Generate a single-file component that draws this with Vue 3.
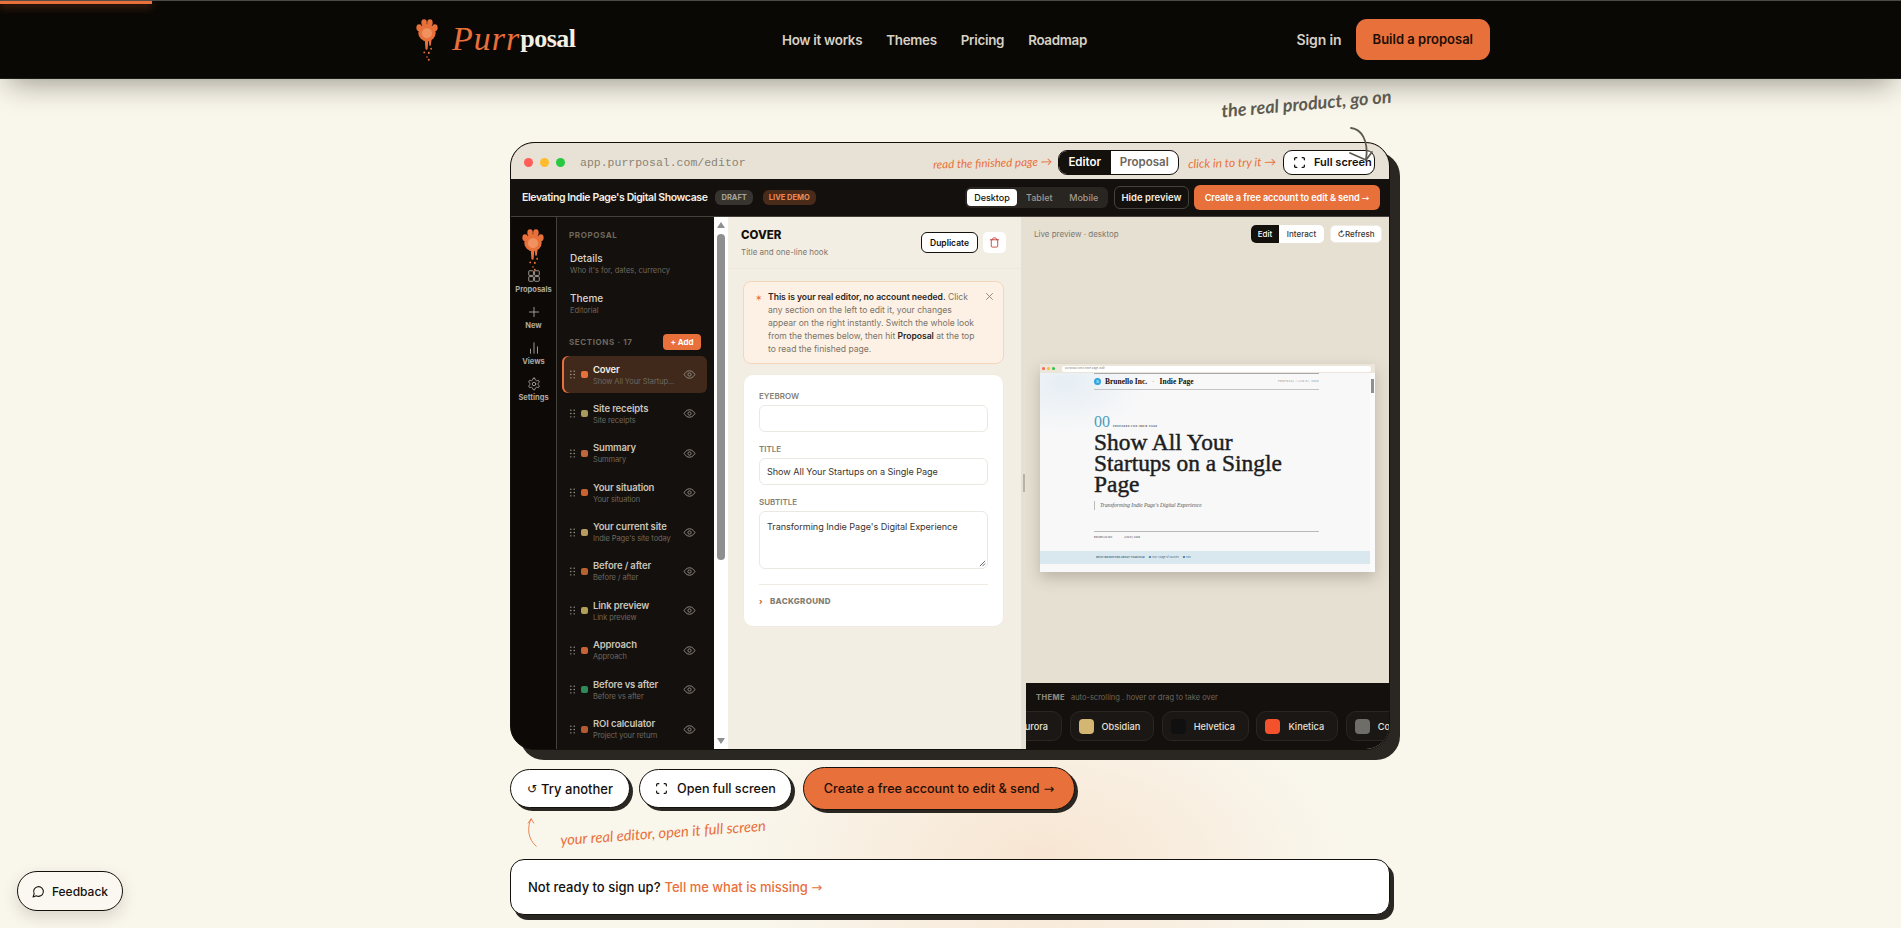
<template>
  <div class="page">
    <header class="site-header">
      <div class="progress"></div>
      <a class="logo">
        <svg class="paw" viewBox="0 0 24 48"><use href="#paw-shape" /></svg>
        <span class="logo-purr">Purr</span><span class="logo-posal">posal</span>
      </a>
      <nav class="site-nav">
        <a>How it works</a>
        <a>Themes</a>
        <a>Pricing</a>
        <a>Roadmap</a>
      </nav>
      <div class="site-actions">
        <a class="sign-in">Sign in</a>
        <a class="build-btn">Build a proposal</a>
      </div>
    </header>

    <!-- shared paw -->
    <svg width="0" height="0" class="defs">
      <defs>
        <g id="paw-shape">
          <ellipse cx="12" cy="15.5" rx="9.5" ry="9.5" fill="#e8703a" />
          <ellipse cx="3.4" cy="10" rx="3" ry="3.8" fill="#e8703a" />
          <ellipse cx="8.8" cy="4.6" rx="3" ry="3.8" fill="#e8703a" />
          <ellipse cx="15.2" cy="4.6" rx="3" ry="3.8" fill="#e8703a" />
          <ellipse cx="20.6" cy="10" rx="3" ry="3.8" fill="#e8703a" />
          <circle cx="12" cy="16" r="5.5" fill="#f0915f" />
          <path d="M9.5 23h4l-.8 10a1.2 1.2 0 0 1-2.4 0z" fill="#e8703a" />
          <path d="M14 23h3l-.8 6a.9.9 0 0 1-1.8 0z" fill="#e8703a" />
          <circle cx="16.5" cy="33" r="1" fill="#e8703a" />
          <circle cx="9" cy="37" r="1" fill="#e8703a" />
          <circle cx="14" cy="37.5" r="1.1" fill="#e8703a" />
          <circle cx="12" cy="42" r=".9" fill="#e8703a" />
          <circle cx="14" cy="45" r="1.1" fill="#e8703a" />
        </g>
      </defs>
    </svg>

    <main class="main">
      <p class="scribble-top">the real product, go on</p>
      <svg class="arrow-top" viewBox="0 0 40 40" fill="none" stroke="#5e5a50" stroke-width="1.8" stroke-linecap="round" stroke-linejoin="round">
        <path d="M6 3C16 4 24 15 21 35" />
        <path d="M5 28l16 7 6-8" />
      </svg>

      <section class="window">
        <div class="titlebar">
          <span class="dot red"></span>
          <span class="dot amber"></span>
          <span class="dot green"></span>
          <span class="url">app.purrposal.com/editor</span>
          <span class="spacer"></span>
          <span class="hand-note">read the finished page →</span>
          <div class="mode-toggle">
            <span class="mode on">Editor</span>
            <span class="mode">Proposal</span>
          </div>
          <span class="hand-note second">click in to try it →</span>
          <button class="fs-btn">
            <svg viewBox="0 0 24 24" fill="none" stroke="currentColor" stroke-width="2.4" stroke-linecap="round"><path d="M3 7V5a2 2 0 0 1 2-2h2M17 3h2a2 2 0 0 1 2 2v2M21 17v2a2 2 0 0 1-2 2h-2M7 21H5a2 2 0 0 1-2-2v-2" /></svg>
            Full screen
          </button>
        </div>

        <div class="toolbar">
          <strong class="doc-title">Elevating Indie Page's Digital Showcase</strong>
          <span class="chip">DRAFT</span>
          <span class="chip live">LIVE DEMO</span>
          <span class="spacer"></span>
          <div class="devices">
            <span class="device on">Desktop</span>
            <span class="device">Tablet</span>
            <span class="device">Mobile</span>
          </div>
          <button class="hide-btn">Hide preview</button>
          <button class="create-small">Create a free account to edit &amp; send <span class="long-arrow">→</span></button>
        </div>

        <div class="workspace">
          <aside class="rail">
            <svg class="rail-paw" viewBox="0 0 24 48"><use href="#paw-shape" /></svg>
            <div class="rail-item">
              <svg viewBox="0 0 24 24" fill="none" stroke="currentColor" stroke-width="1.5"><rect x="3" y="3" width="8" height="8" rx="1" /><rect x="13" y="3" width="8" height="8" rx="1" /><rect x="3" y="13" width="8" height="8" rx="1" /><rect x="13" y="13" width="8" height="8" rx="1" /></svg>
              <span>Proposals</span>
            </div>
            <div class="rail-item">
              <svg viewBox="0 0 24 24" fill="none" stroke="currentColor" stroke-width="1.5" stroke-linecap="round"><path d="M12 4v16M4 12h16" /></svg>
              <span>New</span>
            </div>
            <div class="rail-item">
              <svg viewBox="0 0 24 24" fill="none" stroke="currentColor" stroke-width="1.5" stroke-linecap="round"><path d="M6 21v-7M12 21V3M18 21V10" /></svg>
              <span>Views</span>
            </div>
            <div class="rail-item">
              <svg viewBox="0 0 24 24" fill="none" stroke="currentColor" stroke-width="1.5" stroke-linecap="round" stroke-linejoin="round"><path d="M12.2 2h-.4a2 2 0 0 0-2 2v.2a2 2 0 0 1-1 1.7l-.4.3a2 2 0 0 1-2 0l-.2-.1a2 2 0 0 0-2.7.7l-.2.4a2 2 0 0 0 .7 2.7l.2.1a2 2 0 0 1 1 1.7v.5a2 2 0 0 1-1 1.8l-.2.1a2 2 0 0 0-.7 2.7l.2.4a2 2 0 0 0 2.7.7l.2-.1a2 2 0 0 1 2 0l.4.3a2 2 0 0 1 1 1.7v.2a2 2 0 0 0 2 2h.4a2 2 0 0 0 2-2v-.2a2 2 0 0 1 1-1.7l.4-.3a2 2 0 0 1 2 0l.2.1a2 2 0 0 0 2.7-.7l.2-.4a2 2 0 0 0-.7-2.7l-.2-.1a2 2 0 0 1-1-1.8v-.5a2 2 0 0 1 1-1.7l.2-.1a2 2 0 0 0 .7-2.7l-.2-.4a2 2 0 0 0-2.7-.7l-.2.1a2 2 0 0 1-2 0l-.4-.3a2 2 0 0 1-1-1.7V4a2 2 0 0 0-2-2z" /><circle cx="12" cy="12" r="3" /></svg>
              <span>Settings</span>
            </div>
          </aside>

          <aside class="sections">
            <h4 class="side-label">PROPOSAL</h4>
            <div class="side-link">
              <b>Details</b>
              <small>Who it's for, dates, currency</small>
            </div>
            <div class="side-link">
              <b>Theme</b>
              <small>Editorial</small>
            </div>
            <div class="sections-head">
              <h4 class="side-label">SECTIONS · 17</h4>
              <button class="add-btn">+ Add</button>
            </div>
            <div class="section-list">
              <div v-for="(s, i) in sections" :key="s.name" class="section-row" :class="{ active: i === 0 }">
                <svg class="grip" viewBox="0 0 6 10" fill="#b9b3a8"><circle cx="1" cy="1" r=".8" /><circle cx="5" cy="1" r=".8" /><circle cx="1" cy="5" r=".8" /><circle cx="5" cy="5" r=".8" /><circle cx="1" cy="9" r=".8" /><circle cx="5" cy="9" r=".8" /></svg>
                <span class="sec-dot" :style="{ background: s.color }"></span>
                <div class="sec-text">
                  <b>{{ s.name }}</b>
                  <small>{{ s.sub }}</small>
                </div>
                <svg class="eye" viewBox="0 0 24 24" fill="none" stroke="currentColor" stroke-width="1.8"><path d="M2 12s3.6-7 10-7 10 7 10 7-3.6 7-10 7-10-7-10-7z" /><circle cx="12" cy="12" r="3" /></svg>
              </div>
            </div>
          </aside>

          <div class="scrollbar">
            <i class="arrow up"></i>
            <i class="thumb"></i>
            <i class="arrow down"></i>
          </div>

          <section class="editor">
            <div class="editor-head">
              <div>
                <h3>COVER</h3>
                <p>Title and one-line hook</p>
              </div>
              <button class="dup-btn">Duplicate</button>
              <button class="del-btn">
                <svg viewBox="0 0 24 24" fill="none" stroke="#c8443c" stroke-width="2" stroke-linecap="round" stroke-linejoin="round"><path d="M3 6h18M19 6v14a2 2 0 0 1-2 2H7a2 2 0 0 1-2-2V6M8 6V4a2 2 0 0 1 2-2h4a2 2 0 0 1 2 2v2" /></svg>
              </button>
            </div>
            <div class="notice">
              <span class="star">✶</span>
              <p><b>This is your real editor, no account needed.</b> Click any section on the left to edit it, your changes appear on the right instantly. Switch the whole look from the themes below, then hit <b>Proposal</b> at the top to read the finished page.</p>
              <svg class="close" viewBox="0 0 24 24" fill="none" stroke="#8a8070" stroke-width="2.4" stroke-linecap="round"><path d="M4 4l16 16M20 4L4 20" /></svg>
            </div>
            <div class="form-card">
              <label>EYEBROW</label>
              <div class="field"></div>
              <label>TITLE</label>
              <div class="field">Show All Your Startups on a Single Page</div>
              <label>SUBTITLE</label>
              <div class="field area">
                Transforming Indie Page's Digital Experience
                <svg class="resize" viewBox="0 0 8 8" stroke="#555" stroke-width="1"><path d="M1 7l6-6M4 7l3-3" /></svg>
              </div>
              <div class="bg-row"><span class="caret">›</span> BACKGROUND</div>
            </div>
          </section>

          <div class="resizer"><i></i></div>

          <section class="preview">
            <div class="preview-head">
              <span class="preview-label">Live preview · desktop</span>
              <span class="spacer"></span>
              <div class="edit-toggle">
                <span class="on">Edit</span>
                <span>Interact</span>
              </div>
              <button class="refresh">↻Refresh</button>
            </div>
            <div class="stage">
              <div class="mini">
                <div class="mini-bar">
                  <i class="mini-dot red"></i>
                  <i class="mini-dot amber"></i>
                  <i class="mini-dot green"></i>
                  <span>purrposal.com/s/indie-page-draft</span>
                </div>
                <div class="mini-page">
                  <div class="mini-inner">
                    <div class="mini-brand">
                      <span class="brand-dot">B</span>
                      <b>Brunello Inc.</b><em>·</em><b>Indie Page</b>
                      <span class="spacer"></span>
                      <small>PROPOSAL / JUN 01, 2026</small>
                    </div>
                    <div class="mini-eyebrow"><span>00</span><small>PREPARED FOR INDIE PAGE</small></div>
                    <h1>Show All Your Startups on a Single Page</h1>
                    <p class="mini-sub">Transforming Indie Page's Digital Experience</p>
                    <div class="mini-meta"><span>BRUNELLO INC.</span><span>JUN 01, 2026</span></div>
                  </div>
                  <div class="mini-band"><b>WHAT WE NOTICED ABOUT YOUR PAGE</b><span>● Your 1 page of sources</span><span>● Two</span></div>
                  <div class="mini-scroll"><i></i></div>
                </div>
              </div>
            </div>
            <div class="theme-bar">
              <div class="theme-head"><b>THEME</b><span>auto-scrolling . hover or drag to take over</span></div>
              <div class="theme-track">
                <div v-for="t in themes" :key="t.name" class="theme-chip" :class="t.cls">
                  <i v-if="t.color" :style="{ background: t.color }"></i>
                  <span>{{ t.name }}</span>
                </div>
              </div>
            </div>
          </section>
        </div>
      </section>

      <div class="actions">
        <button class="pill"><span class="glyph">↺</span> Try another</button>
        <button class="pill open">
          <svg viewBox="0 0 24 24" fill="none" stroke="currentColor" stroke-width="2.2" stroke-linecap="round"><path d="M3 7V5a2 2 0 0 1 2-2h2M17 3h2a2 2 0 0 1 2 2v2M21 17v2a2 2 0 0 1-2 2h-2M7 21H5a2 2 0 0 1-2-2v-2" /></svg>
          Open full screen
        </button>
        <button class="pill primary">Create a free account to edit &amp; send <span class="long-arrow">→</span></button>
      </div>

      <div class="below-note">
        <svg viewBox="0 0 14 34" fill="none" stroke="#e8703a" stroke-width="1" stroke-linecap="round" stroke-linejoin="round"><path d="M6 1C1 11 2 25 12 33" /><path d="M2.5 6L6 1l3 5" /></svg>
        <span>your real editor, open it full screen</span>
      </div>

      <div class="not-ready">
        Not ready to sign up? <a>Tell me what is missing <span class="long-arrow">→</span></a>
      </div>
    </main>

    <button class="feedback">
      <svg viewBox="0 0 24 24" fill="none" stroke="currentColor" stroke-width="2" stroke-linecap="round" stroke-linejoin="round"><path d="M7.9 20A9 9 0 1 0 4 16.1L2 22Z" /></svg>
      Feedback
    </button>
  </div>
</template>

<script setup>
const sections = [
  { name: 'Cover', sub: 'Show All Your Startup...', color: '#e8703a' },
  { name: 'Site receipts', sub: 'Site receipts', color: '#a8985a' },
  { name: 'Summary', sub: 'Summary', color: '#c0673a' },
  { name: 'Your situation', sub: 'Your situation', color: '#c9622f' },
  { name: 'Your current site', sub: "Indie Page's site today", color: '#b89a5e' },
  { name: 'Before / after', sub: 'Before / after', color: '#b8622f' },
  { name: 'Link preview', sub: 'Link preview', color: '#b0a055' },
  { name: 'Approach', sub: 'Approach', color: '#c96236' },
  { name: 'Before vs after', sub: 'Before vs after', color: '#2e8b57' },
  { name: 'ROI calculator', sub: 'Project your return', color: '#b5592e' }
]

const themes = [
  { name: 'Aurora', cls: 'clipped' },
  { name: 'Obsidian', color: '#d4b672' },
  { name: 'Helvetica', color: '#111010' },
  { name: 'Kinetica', color: '#f4522d' },
  { name: 'Concrete', color: '#6f6d68' }
]
</script>

<style>
html,
body {
  margin: 0;
  overflow: hidden;
  background: #f9f6ec;
}
</style>

<style scoped>
* {
  box-sizing: border-box;
}

button {
  font-family: inherit;
  cursor: pointer;
}

h1, h3, h4, p {
  margin: 0;
}

.page {
  position: relative;
  height: 928px;
  overflow: hidden;
  font-family: Inter, "Noto Sans", sans-serif;
  color: #14100c;
  background:
    radial-gradient(ellipse 300px 170px at 1040px 860px, rgba(245, 190, 150, 0.3), rgba(245, 190, 150, 0) 100%),
    #f9f6ec;
}

.spacer {
  flex: 1;
}

.defs {
  position: absolute;
}

.long-arrow {
  font-family: "DejaVu Sans", sans-serif;
  font-weight: 400;
}

/* header */
.site-header {
  position: relative;
  height: 79px;
  display: flex;
  align-items: center;
  padding: 0 411px 0 416px;
  background: #0a0805;
  border-top: 1px solid #4a4a48;
  border-bottom: 1px solid #1e1c18;
  box-shadow: 0 12px 30px -8px rgba(20, 15, 5, 0.42);
}

.progress {
  position: absolute;
  left: 0;
  top: 0;
  width: 152px;
  height: 3px;
  background: #e8703a;
  box-shadow: 0 2px 8px rgba(232, 112, 58, 0.5);
}

.logo {
  display: flex;
  align-items: center;
  width: 366px;
  margin-top: -2px;
}

.paw {
  width: 22px;
  height: 45px;
  margin: 4px 14px 0 0;
}

.logo-purr {
  font-family: "Liberation Serif", serif;
  font-style: italic;
  font-size: 34px;
  letter-spacing: 1px;
  color: #e8703a;
}

.logo-posal {
  font-family: "Liberation Serif", serif;
  font-weight: 700;
  font-size: 26px;
  letter-spacing: -0.5px;
  color: #f4efe4;
}

.site-nav {
  display: flex;
  gap: 24px;
}

.site-nav a {
  font-size: 13.4px;
  font-weight: 600;
  letter-spacing: -0.3px;
  color: #d6d1c5;
}

.sign-in {
  font-size: 14px;
  font-weight: 600;
  letter-spacing: -0.1px;
  color: #d6d1c5;
}

.site-actions {
  margin-left: auto;
  display: flex;
  align-items: center;
  gap: 14px;
}

.build-btn {
  display: flex;
  align-items: center;
  height: 41px;
  padding: 0 17px;
  border-radius: 11px;
  margin-top: -1px;
  background: #e8703a;
  color: #1c0e05;
  font-size: 13px;
  font-weight: 600;
}

/* main column */
.main {
  position: relative;
  width: 880px;
  margin: 0 0 0 510px;
  padding-top: 63px;
}

.scribble-top {
  position: absolute;
  left: 711px;
  top: 13px;
  font-family: Lato, sans-serif;
  font-style: italic;
  font-weight: 700;
  font-size: 18px;
  color: #5e5a50;
  transform: rotate(-5deg);
  white-space: nowrap;
}

.arrow-top {
  position: absolute;
  z-index: 3;
  left: 835px;
  top: 46px;
  width: 40px;
  height: 40px;
}

.window {
  height: 608px;
  display: flex;
  flex-direction: column;
  border: 1px solid #14100c;
  border-radius: 24px;
  overflow: hidden;
  box-shadow: 10px 10px 0 #2a2622;
  background: #14100d;
}

.titlebar {
  height: 36px;
  flex: none;
  display: flex;
  align-items: center;
  gap: 7px;
  padding: 2px 14px 0 13px;
  background: #e8e2d6;
}

.dot {
  width: 9px;
  height: 9px;
  border-radius: 50%;
}

.dot.red { background: #ff5f57; }
.dot.amber { background: #febc2e; }
.dot.green { background: #28c840; }

.url {
  margin-left: 8px;
  font-family: "Liberation Mono", monospace;
  font-size: 11.5px;
  color: #8a8375;
}

.hand-note {
  font-family: Lato, sans-serif;
  font-style: italic;
  font-size: 11.5px;
  color: #e8703a;
  transform: rotate(-1.5deg);
  white-space: nowrap;
  margin-right: -1px;
}

.hand-note.second {
  margin-left: 2px;
  margin-right: 0;
  font-size: 12px;
}

.mode-toggle {
  display: flex;
  height: 25px;
  border: 1px solid #14100c;
  border-radius: 9px;
  overflow: hidden;
  background: #fff;
  font-size: 11.5px;
  font-weight: 600;
}

.mode {
  display: flex;
  align-items: center;
  justify-content: center;
  width: 67px;
  color: #6b665c;
}

.mode.on {
  width: 52px;
  background: #14100c;
  color: #fff;
}

.fs-btn {
  display: flex;
  align-items: center;
  gap: 8px;
  height: 25px;
  width: 92px;
  padding: 0 0 0 9px;
  border: 1px solid #14100c;
  border-radius: 9px;
  background: #fff;
  color: #14100c;
  font-size: 11px;
  font-weight: 600;
  white-space: nowrap;
}

.fs-btn svg {
  width: 13px;
  height: 13px;
  flex: none;
}

.toolbar {
  height: 38px;
  flex: none;
  display: flex;
  align-items: center;
  padding: 0 9px 0 11px;
  background: #14100d;
  border-bottom: 1px solid #45423c;
}

.doc-title {
  font-size: 10.5px;
  font-weight: 600;
  letter-spacing: -0.4px;
  color: #f3efe6;
}

.chip {
  display: flex;
  align-items: center;
  height: 15px;
  margin-left: 8px;
  padding: 0 6px;
  border-radius: 6px;
  background: #37332e;
  color: #a8a298;
  font-size: 7.5px;
  font-weight: 700;
}

.chip.live {
  margin-left: 10px;
  background: #4a2a19;
  color: #ec8a55;
}

.devices {
  display: flex;
  align-items: center;
  gap: 0;
  height: 21px;
  padding: 0 2px;
  border-radius: 6px;
  background: #292521;
}

.device {
  display: flex;
  align-items: center;
  justify-content: center;
  width: 44.5px;
  height: 17px;
  border-radius: 4px;
  color: #a09a90;
  font-size: 9px;
  font-weight: 500;
}

.device.on {
  width: 50px;
  background: #fff;
  color: #14100c;
}

.hide-btn {
  height: 23px;
  margin-left: 6px;
  width: 75px;
  padding: 0;
  border: 1px solid #45423c;
  border-radius: 6px;
  background: #14100d;
  color: #f3efe6;
  font-size: 9.5px;
  font-weight: 600;
}

.create-small {
  height: 25px;
  width: 186px;
  margin-left: 5px;
  padding: 0;
  border: 0;
  border-radius: 6px;
  background: #e8703a;
  color: #fff;
  font-size: 9.2px;
  font-weight: 600;
  letter-spacing: -0.1px;
}

.workspace {
  flex: 1;
  min-height: 0;
  display: flex;
}

/* icon rail */
.rail {
  position: relative;
  width: 46px;
  flex: none;
  padding-top: 52px;
  background: #0c0906;
  border-right: 1px solid #45423c;
}

.rail-paw {
  position: absolute;
  left: 11px;
  top: 11px;
  width: 22px;
  height: 45px;
}

.rail-item {
  height: 36px;
  display: flex;
  flex-direction: column;
  align-items: center;
  color: #b0aaa0;
}

.rail-item svg {
  width: 14px;
  height: 14px;
  margin-bottom: 2px;
}

.rail-item span {
  font-size: 7.5px;
  font-weight: 700;
}

/* section list */
.sections {
  width: 157px;
  flex: none;
  padding: 13px 7px 0 5px;
  background: #14100d;
  overflow: hidden;
}

.side-label {
  padding-left: 7px;
  font-size: 8px;
  font-weight: 700;
  letter-spacing: 0.6px;
  color: #6e685e;
}

.side-link {
  height: 40px;
  padding: 12px 0 0 8px;
}

.side-link b {
  display: block;
  font-size: 10px;
  font-weight: 500;
  color: #d9d4c9;
}

.side-link small {
  display: block;
  margin-top: 2px;
  font-size: 7.5px;
  color: #6e685e;
}

.sections-head {
  display: flex;
  align-items: center;
  justify-content: space-between;
  margin-top: 14px;
  padding-right: 6px;
}

.add-btn {
  width: 38px;
  height: 16px;
  padding: 0;
  border: 0;
  border-radius: 4px;
  background: #e8703a;
  color: #fff;
  font-size: 8px;
  font-weight: 700;
}

.section-list {
  display: flex;
  flex-direction: column;
  gap: 2.4px;
  margin-top: 6px;
}

.section-row {
  height: 37px;
  flex: none;
  display: flex;
  align-items: center;
  padding: 0 11px 0 8px;
  border-radius: 6px;
}

.section-row.active {
  background: #40291b;
  box-shadow: inset 2px 0 0 #e8703a;
}

.grip {
  width: 5px;
  height: 9px;
  flex: none;
}

.sec-dot {
  width: 7px;
  height: 7px;
  margin-left: 6px;
  border-radius: 2px;
  flex: none;
}

.sec-text {
  flex: 1;
  min-width: 0;
  margin-left: 5px;
}

.sec-text b {
  display: block;
  font-size: 9.5px;
  font-weight: 600;
  letter-spacing: -0.15px;
  color: #c9c4b9;
}

.section-row.active .sec-text b {
  color: #f4efe6;
}

.sec-text small {
  display: block;
  margin-top: 2px;
  font-size: 7.5px;
  letter-spacing: -0.1px;
  color: #6e685e;
  white-space: nowrap;
}

.eye {
  width: 13px;
  height: 13px;
  flex: none;
  color: #8e897f;
}

/* fake native scrollbar */
.scrollbar {
  position: relative;
  width: 14px;
  flex: none;
  background: #fff;
}

.thumb {
  position: absolute;
  left: 3px;
  top: 17px;
  width: 8px;
  height: 326px;
  border-radius: 4px;
  background: #8f8f8f;
}

.arrow {
  position: absolute;
  left: 3px;
  width: 0;
  height: 0;
  border-left: 4px solid transparent;
  border-right: 4px solid transparent;
}

.arrow.up {
  top: 5px;
  border-bottom: 6px solid #8f8f8f;
}

.arrow.down {
  bottom: 5px;
  border-top: 6px solid #8f8f8f;
}

/* editor */
.editor {
  width: 293px;
  flex: none;
  background: #f3eee3;
}

.editor-head {
  height: 52px;
  display: flex;
  align-items: flex-start;
  padding: 11px 15px 0 13px;
  border-bottom: 1px solid #efe9dc;
}

.editor-head > div {
  flex: 1;
}

.editor-head h3 {
  font-size: 11.5px;
  font-weight: 800;
  line-height: 14px;
  color: #14100c;
}

.editor-head p {
  margin-top: 5px;
  font-size: 8px;
  color: #7e786d;
}

.dup-btn {
  width: 57px;
  height: 21px;
  margin-top: 4px;
  padding: 0;
  border: 1px solid #14100c;
  border-radius: 6px;
  background: #fff;
  color: #14100c;
  font-size: 8.5px;
  font-weight: 600;
}

.del-btn {
  display: flex;
  align-items: center;
  justify-content: center;
  width: 23px;
  height: 21px;
  margin: 4px 0 0 5px;
  padding: 0;
  border: 0;
  border-radius: 5px;
  background: #fff;
}

.del-btn svg {
  width: 11px;
  height: 11px;
}

.notice {
  position: relative;
  display: flex;
  height: 83px;
  margin: 12px 17px 10px 15px;
  padding: 9px 0 0 11px;
  border: 1px solid #f4d6bb;
  border-radius: 8px;
  background: #fdf1e5;
}

.star {
  width: 13px;
  flex: none;
  font-size: 9px;
  line-height: 13px;
  color: #e8703a;
}

.notice p {
  width: 211px;
  font-size: 8.6px;
  line-height: 13px;
  letter-spacing: -0.03px;
  color: #7b7468;
}

.notice b {
  font-weight: 600;
  color: #2b261f;
}

.close {
  position: absolute;
  top: 10px;
  right: 9px;
  width: 9px;
  height: 9px;
}

.form-card {
  height: 253px;
  margin: 0 17px 0 15px;
  padding: 15px 15px 0;
  border: 1px solid #f0ebe1;
  border-radius: 10px;
  background: #fff;
}

.form-card label {
  display: block;
  height: 15px;
  font-size: 8px;
  font-weight: 600;
  line-height: 12px;
  color: #857f74;
}

.field {
  position: relative;
  height: 27px;
  margin-bottom: 11px;
  padding-left: 7px;
  border: 1px solid #ebe8e2;
  border-radius: 6px;
  font-size: 9.1px;
  line-height: 25px;
  letter-spacing: -0.05px;
  color: #3a3630;
}

.field.area {
  height: 58px;
  margin-bottom: 0;
  padding-top: 1px;
  line-height: 27px;
}

.resize {
  position: absolute;
  right: 1px;
  bottom: 1px;
  width: 7px;
  height: 7px;
}

.bg-row {
  margin-top: 15px;
  padding-top: 11px;
  border-top: 1px solid #f0ebe1;
  font-size: 8px;
  font-weight: 800;
  letter-spacing: 0.3px;
  color: #827c72;
}

.caret {
  margin-right: 5px;
  color: #c9622f;
}

.resizer {
  position: relative;
  width: 5px;
  flex: none;
  background: #e6e0d3;
}

.resizer i {
  position: absolute;
  left: 2px;
  top: 257px;
  width: 1.5px;
  height: 18px;
  background: #b8b2a6;
}

/* preview */
.preview {
  flex: 1;
  min-width: 0;
  display: flex;
  flex-direction: column;
  background: #e6e0d3;
}

.preview-head {
  height: 30px;
  flex: none;
  display: flex;
  align-items: flex-start;
  padding: 8px 7px 0 8px;
}

.preview-label {
  padding-top: 4px;
  font-size: 8px;
  color: #7e786d;
}

.edit-toggle {
  display: flex;
  height: 18px;
  border-radius: 5px;
  overflow: hidden;
  background: #fff;
  font-size: 8px;
  font-weight: 500;
  color: #3c3830;
}

.edit-toggle span {
  display: flex;
  align-items: center;
  justify-content: center;
  width: 45px;
}

.edit-toggle .on {
  width: 28px;
  background: #14100c;
  color: #fff;
}

.refresh {
  width: 52px;
  height: 18px;
  margin-left: 6px;
  padding: 0;
  border: 1px solid #f0ebe1;
  border-radius: 5px;
  background: #fff;
  color: #3c3830;
  font-size: 8px;
  font-weight: 500;
}

.stage {
  flex: 1;
  display: flex;
  align-items: flex-start;
  padding: 117px 14px 0 14px;
}

.mini {
  width: 337px;
  height: 208px;
  display: flex;
  flex-direction: column;
  background: #f8f8f9;
  box-shadow: 0 6px 14px rgba(60, 50, 30, 0.25);
}

.mini-bar {
  height: 9px;
  flex: none;
  display: flex;
  align-items: center;
  gap: 2px;
  padding: 0 4px 0 2px;
  background: #ece6da;
}

.mini-dot {
  width: 3px;
  height: 3px;
  border-radius: 50%;
}

.mini-dot.red { background: #ff5f57; }
.mini-dot.amber { background: #febc2e; }
.mini-dot.green { background: #28c840; }

.mini-bar span {
  flex: 1;
  height: 6px;
  margin-left: 5px;
  padding-left: 3px;
  border-radius: 2px;
  background: #fff;
  font-size: 2.5px;
  line-height: 6px;
  color: #8a8375;
}

.mini-page {
  position: relative;
  flex: 1;
  background: radial-gradient(ellipse 80px 50px at 25px 10px, #e6eef4, rgba(230, 238, 244, 0)), #f8f8f9;
}

.mini-inner {
  width: 225px;
  margin-left: 54px;
}

.mini-brand {
  height: 17px;
  display: flex;
  align-items: center;
  gap: 4px;
  border-top: 1px solid #a8a8a8;
  border-bottom: 1px solid #c4c4c4;
  font-family: "Liberation Serif", serif;
  font-size: 7.5px;
}

.brand-dot {
  display: flex;
  align-items: center;
  justify-content: center;
  width: 7px;
  height: 7px;
  border-radius: 50%;
  background: #2ba3e0;
  color: #fff;
  font-size: 4px;
}

.mini-brand em {
  margin: 0 1px;
  color: #888;
  font-style: normal;
}

.mini-brand small {
  font-family: Inter, sans-serif;
  font-size: 2.5px;
  color: #888;
  letter-spacing: 0.4px;
}

.mini-eyebrow {
  display: flex;
  align-items: flex-end;
  gap: 3px;
  margin-top: 24px;
}

.mini-eyebrow span {
  font-family: "Liberation Serif", serif;
  font-size: 16px;
  line-height: 15px;
  color: #4a9cc0;
}

.mini-eyebrow small {
  font-size: 2.5px;
  line-height: 5px;
  font-weight: 700;
  letter-spacing: 0.5px;
  color: #555;
}

.mini-page h1 {
  width: 205px;
  margin-top: 3px;
  font-family: "Liberation Serif", serif;
  font-weight: 400;
  font-size: 23.4px;
  line-height: 21px;
  -webkit-text-stroke: 0.45px #1d1d1d;
  color: #1d1d1d;
}

.mini-sub {
  margin-top: 6px;
  padding-left: 5px;
  border-left: 1px solid #bbb;
  font-family: "Liberation Serif", serif;
  font-style: italic;
  font-size: 5.5px;
  line-height: 9px;
  color: #555;
}

.mini-meta {
  display: flex;
  gap: 11px;
  margin-top: 21px;
  padding-top: 4px;
  border-top: 1px solid #b8b8b8;
  font-size: 2.5px;
  color: #444;
}

.mini-band {
  display: flex;
  align-items: center;
  gap: 4px;
  width: 332px;
  height: 13px;
  margin-top: 12px;
  padding-left: 56px;
  background: #d9e8ef;
  font-size: 2.5px;
  color: #4a6a7c;
}

.mini-scroll {
  position: absolute;
  right: 0;
  top: 0;
  bottom: 0;
  width: 5px;
  background: #fbfbfb;
}

.mini-scroll i {
  display: block;
  width: 3px;
  height: 14px;
  margin: 6px 1px;
  background: #8f8f8f;
}

.theme-bar {
  height: 66px;
  flex: none;
  overflow: hidden;
  background: #14100d;
}

.theme-head {
  height: 28px;
  display: flex;
  align-items: center;
  gap: 6px;
  padding: 1px 0 0 10px;
}

.theme-head b {
  font-size: 7.5px;
  font-weight: 800;
  letter-spacing: 0.4px;
  color: #8a857b;
}

.theme-head span {
  font-size: 7.5px;
  color: #6e685e;
}

.theme-track {
  display: flex;
  gap: 7.5px;
  margin-left: -50px;
  width: 500px;
}

.theme-chip {
  height: 30px;
  flex: none;
  display: flex;
  align-items: center;
  gap: 8px;
  padding: 0 13px 0 8px;
  border: 1px solid #2a2622;
  border-radius: 10px;
  background: #1b1714;
  font-size: 9.2px;
  font-weight: 500;
  color: #e6e1d6;
}

.theme-chip.clipped {
  width: 86px;
  justify-content: flex-end;
}

.theme-chip i {
  width: 15px;
  height: 15px;
  border-radius: 4px;
}

/* actions */
.actions {
  display: flex;
  align-items: center;
  gap: 9px;
  margin-top: 17px;
}

.pill {
  display: flex;
  align-items: center;
  justify-content: center;
  height: 39px;
  padding: 0;
  border: 1.5px solid #14100c;
  border-radius: 20px;
  background: #fff;
  box-shadow: 3px 3px 0 #2a2622;
  color: #14100c;
  font-size: 13px;
  font-weight: 500;
  white-space: nowrap;
}

.pill:first-child {
  width: 120px;
  gap: 4px;
}

.glyph {
  font-family: "DejaVu Sans", sans-serif;
  font-size: 12px;
}

.pill.open {
  width: 153px;
  gap: 9px;
  font-size: 12.6px;
}

.pill.open svg {
  width: 13px;
  height: 13px;
}

.pill.primary {
  width: 272px;
  height: 43px;
  margin-left: 2px;
  gap: 4px;
  border-radius: 22px;
  background: #e8703a;
  color: #1c0e05;
  font-size: 12.6px;
}

.below-note {
  height: 49px;
  display: flex;
  align-items: flex-start;
  padding: 6px 0 0 16px;
}

.below-note svg {
  width: 12px;
  height: 33px;
  flex: none;
}

.below-note span {
  margin: 7px 0 0 22px;
  font-family: Lato, sans-serif;
  font-style: italic;
  font-size: 14.7px;
  color: #e8703a;
  transform: rotate(-4deg);
  white-space: nowrap;
}

.not-ready {
  display: flex;
  align-items: center;
  gap: 4px;
  height: 56px;
  padding-left: 17px;
  border: 1.5px solid #14100c;
  border-radius: 14px;
  background: #fff;
  box-shadow: 4px 5px 0 #2a2622;
  font-size: 13px;
  font-weight: 500;
}

.not-ready a {
  color: #e8703a;
  font-weight: 500;
}

.feedback {
  position: absolute;
  left: 17px;
  top: 871px;
  display: flex;
  align-items: center;
  justify-content: center;
  gap: 7px;
  width: 106px;
  height: 40px;
  padding: 0;
  border: 1px solid #14100c;
  border-radius: 20px;
  background: #fbf8f1;
  box-shadow: 0 6px 16px rgba(40, 30, 10, 0.15);
  color: #14100c;
  font-size: 12px;
  font-weight: 500;
}

.feedback svg {
  width: 13px;
  height: 13px;
}
</style>
